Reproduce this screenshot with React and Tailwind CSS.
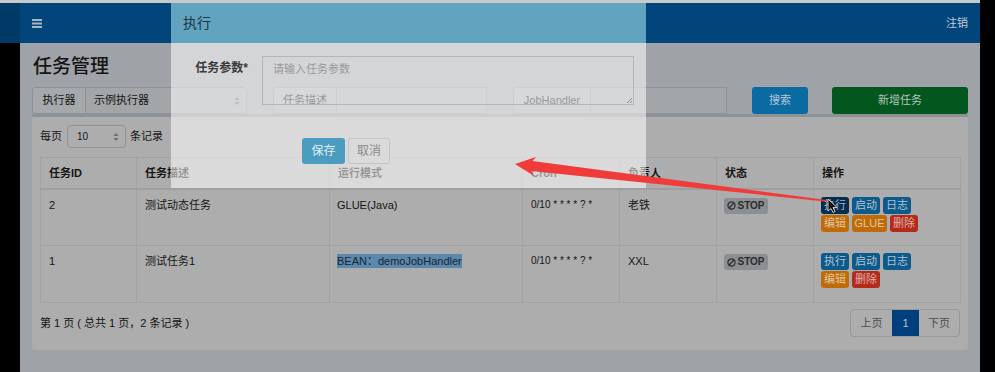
import React from "react";

const rows = [
  { id: "2", desc: "测试动态任务", mode: "GLUE(Java)", cron: "0/10 * * * * ? *", owner: "老铁", glue: true },
  { id: "1", desc: "测试任务1", mode: "BEAN：demoJobHandler", cron: "0/10 * * * * ? *", owner: "XXL", glue: false, selected: true },
];

function UpDown() {
  return (
    <svg width="6" height="10" viewBox="0 0 6 10" className="shrink-0">
      <path d="M3 1 L5.5 4 H0.5 Z" fill="#6b6e72" />
      <path d="M3 9 L5.5 6 H0.5 Z" fill="#6b6e72" />
    </svg>
  );
}

function Btn({ children, className, w = "w-[28px]" }) {
  return (
    <span className={`${w} h-[17px] leading-[17px] text-center rounded-[3px] text-[11px] ${className}`}>{children}</span>
  );
}

function Actions({ glue, hovered }) {
  return (
    <div className="flex flex-col gap-[1px]">
      <div className="flex gap-[3px]">
        <Btn className={hovered ? "bg-[#062d51] text-[#9fb0c0]" : "bg-[#0c5a8c] text-[#b2c0cd]"}>执行</Btn>
        <Btn className="bg-[#0c5a8c] text-[#b2c0cd]">启动</Btn>
        <Btn className="bg-[#0c5a8c] text-[#b2c0cd]">日志</Btn>
      </div>
      <div className="flex gap-[3px]">
        <Btn className="bg-[#bf6c08] text-[#e0c39f]">编辑</Btn>
        {glue && <Btn w="w-[35px]" className="bg-[#bf6c08] text-[#e0c39f]">GLUE</Btn>}
        <Btn className="bg-[#b42a1b] text-[#dfb0a9]">删除</Btn>
      </div>
    </div>
  );
}

export default function App() {
  return (
    <div className="relative w-[995px] h-[372px] overflow-hidden bg-black font-['Liberation_Sans','Noto_Sans_CJK_SC',sans-serif] text-[11px] text-[#151515]">
      <div className="w-[980px] h-[3px] bg-[#c9c9c9]" />
      <div className="flex w-[980px] h-[369px]">
        <div className="w-[20px] flex flex-col">
          <div className="h-[40px] bg-[#003a66]" />
          <div className="flex-1 bg-black" />
        </div>
        <div className="w-[960px] flex flex-col">
          <header className="h-[40px] bg-[#01457a] flex items-center justify-between pl-[12px] pr-[12px]">
            <svg width="10" height="9" viewBox="0 0 10 9">
              <rect x="0" y="0" width="10" height="2" fill="#a7b6c4" />
              <rect x="0" y="3.5" width="10" height="2" fill="#a7b6c4" />
              <rect x="0" y="7" width="10" height="2" fill="#a7b6c4" />
            </svg>
            <span className="text-[#c5ced8]">注销</span>
          </header>
          <main className="flex-1 bg-[#9fa2a6] px-[12px] pt-[12px]">
            <h1 className="text-[19px] leading-[24px] pl-[1px] font-medium text-[#141414]">任务管理</h1>
            <div className="mt-[8px] flex h-[27px]">
              <div className="flex w-[215px]">
                <span className="w-[54px] flex items-center justify-center border border-[#8e9195] bg-[#a6a9ac] rounded-l-[3px]">执行器</span>
                <div className="flex-1 flex items-center justify-between border border-l-0 border-[#8e9195] bg-[#a3a6a9] rounded-r-[5px] pl-[8px] pr-[6px]">
                  <span>示例执行器</span>
                  <UpDown />
                </div>
              </div>
              <div className="flex w-[214px] ml-[26px]">
                <span className="w-[64px] flex items-center justify-center border border-[#8e9195] bg-[#a6a9ac] rounded-l-[3px]">任务描述</span>
                <div className="flex-1 border border-l-0 border-[#8e9195] bg-[#a3a6a9]" />
              </div>
              <div className="flex w-[214px] ml-[26px]">
                <span className="w-[78px] flex items-center justify-center border border-[#8e9195] bg-[#a6a9ac] rounded-l-[3px]">JobHandler</span>
                <div className="flex-1 border border-l-0 border-[#8e9195] bg-[#a3a6a9]" />
              </div>
              <div className="w-[56px] ml-[25px] flex items-center justify-center rounded-[3px] bg-[#0a6aa2] text-[#b5c7d6]">搜索</div>
              <div className="w-[136px] ml-[24px] flex items-center justify-center rounded-[3px] bg-[#04561f] text-[#b4c6b9]">新增任务</div>
            </div>
            <div className="bg-[#adadad] border-t-[3px] border-[#8e9195] rounded-b-[3px] px-[8px] pt-[8px] h-[236px]">
              <div className="flex items-center h-[23px]">
                <span>每页</span>
                <div className="ml-[5px] w-[59px] h-[23px] flex items-center justify-between border border-[#929292] rounded-[4px] pl-[9px] pr-[6px]">
                  <span className="text-[10px]">10</span>
                  <UpDown />
                </div>
                <span className="ml-[4px]">条记录</span>
              </div>
              <table className="mt-[9px] w-[920px] table-fixed border-collapse leading-[14px]">
                <colgroup>
                  <col className="w-[96px]" />
                  <col className="w-[193px]" />
                  <col className="w-[193px]" />
                  <col className="w-[97px]" />
                  <col className="w-[97px]" />
                  <col className="w-[97px]" />
                  <col className="w-[147px]" />
                </colgroup>
                <thead>
                  <tr className="h-[31px]">
                    {["任务ID", "任务描述", "运行模式", "Cron", "负责人", "状态", "操作"].map((h) => (
                      <th key={h} className="border border-[#a2a2a2] border-b-2 border-b-[#9e9e9e] px-[8px] pt-[8px] align-top text-left font-bold">{h}</th>
                    ))}
                  </tr>
                </thead>
                <tbody>
                  {rows.map((r, i) => (
                    <tr key={r.id} className="h-[57px]">
                      <td className="border border-[#a2a2a2] px-[8px] pt-[8px] align-top">{r.id}</td>
                      <td className="border border-[#a2a2a2] px-[8px] pt-[8px] align-top">{r.desc}</td>
                      <td className="border border-[#a2a2a2] px-[7px] pt-[8px] align-top">
                        {r.selected ? <span className="bg-[#5b89ad] py-[1px] text-[#1a2532]">{r.mode}</span> : r.mode}
                      </td>
                      <td className="border border-[#a2a2a2] px-[8px] pt-[8px] align-top text-[10px]">{r.cron}</td>
                      <td className="border border-[#a2a2a2] px-[8px] pt-[8px] align-top">{r.owner}</td>
                      <td className="border border-[#a2a2a2] px-[7px] pt-[8px] align-top">
                        <span className="inline-flex items-center gap-[1px] h-[16px] w-[44px] justify-center rounded-[3px] bg-[#8b8f94] text-[10px] font-bold text-[#2b2b2b]">
                          <svg width="9" height="9" viewBox="0 0 9 9">
                            <circle cx="4.5" cy="4.5" r="3.6" fill="none" stroke="#2b2b2b" strokeWidth="1.2" />
                            <path d="M2 7 L7 2" stroke="#2b2b2b" strokeWidth="1.2" />
                          </svg>
                          STOP
                        </span>
                      </td>
                      <td className="border border-[#a2a2a2] px-[7px] pt-[7px] align-top">
                        <Actions glue={r.glue} hovered={i === 0} />
                      </td>
                    </tr>
                  ))}
                </tbody>
              </table>
              <div className="mt-[6px] flex items-center justify-between h-[28px]">
                <span>第 1 页 ( 总共 1 页，2 条记录 )</span>
                <div className="flex h-[28px] border border-[#989898] rounded-[4px] overflow-hidden text-[#4d4d4d]">
                  <span className="w-[41px] flex items-center justify-center">上页</span>
                  <span className="w-[27px] flex items-center justify-center bg-[#003f7b] text-[#b9c6d3]">1</span>
                  <span className="w-[40px] flex items-center justify-center">下页</span>
                </div>
              </div>
            </div>
          </main>
        </div>
      </div>

      <div className="absolute left-[171px] top-[3px] w-[475px] h-[185px] flex flex-col">
        <div className="h-[40px] bg-[#62a3bf] flex items-center px-[12px] text-[14px] text-[#1b3747]">执行</div>
        <div className="flex-1 bg-white/55 pt-[13px]">
          <div className="flex">
            <label className="w-[77px] text-right pt-[5px] leading-[14px] text-[12px] font-bold text-[#3a3a3a]">任务参数*</label>
            <div className="relative ml-[14px] w-[372px] h-[49px] border border-[#b3b7bb] pl-[10px] pt-[5px] leading-[14px] text-[#9a9a9a]">
              请输入任务参数
              <svg className="absolute right-[1px] bottom-[1px]" width="6" height="6" viewBox="0 0 6 6">
                <path d="M6 1 L1 6 M6 4 L4 6" stroke="#777" strokeWidth="0.8" />
              </svg>
            </div>
          </div>
          <div className="flex gap-[3px] ml-[131px] mt-[33px]">
            <span className="w-[43px] h-[26px] flex items-center justify-center rounded-[3px] bg-[#4a9cc0] text-[12px] text-[#e2eef4]">保存</span>
            <span className="w-[42px] h-[26px] flex items-center justify-center rounded-[3px] border border-[#c4c4c4] bg-[#dadada] text-[12px] text-[#8a8a8a]">取消</span>
          </div>
        </div>
      </div>

      <svg className="absolute left-0 top-0 pointer-events-none" width="995" height="372" viewBox="0 0 995 372">
        <polygon points="515,164 536,156.9 532.5,161 828.1,200.3 827.9,201.7 531.3,171 533.8,175.7" fill="#f03b3b" />
        <path d="M828 199 L828 211 L831 208.5 L833 212.5 L835 211.5 L833 207.5 L837 207.5 Z" fill="#111" stroke="#eee" strokeWidth="0.8" />
      </svg>
    </div>
  );
}
